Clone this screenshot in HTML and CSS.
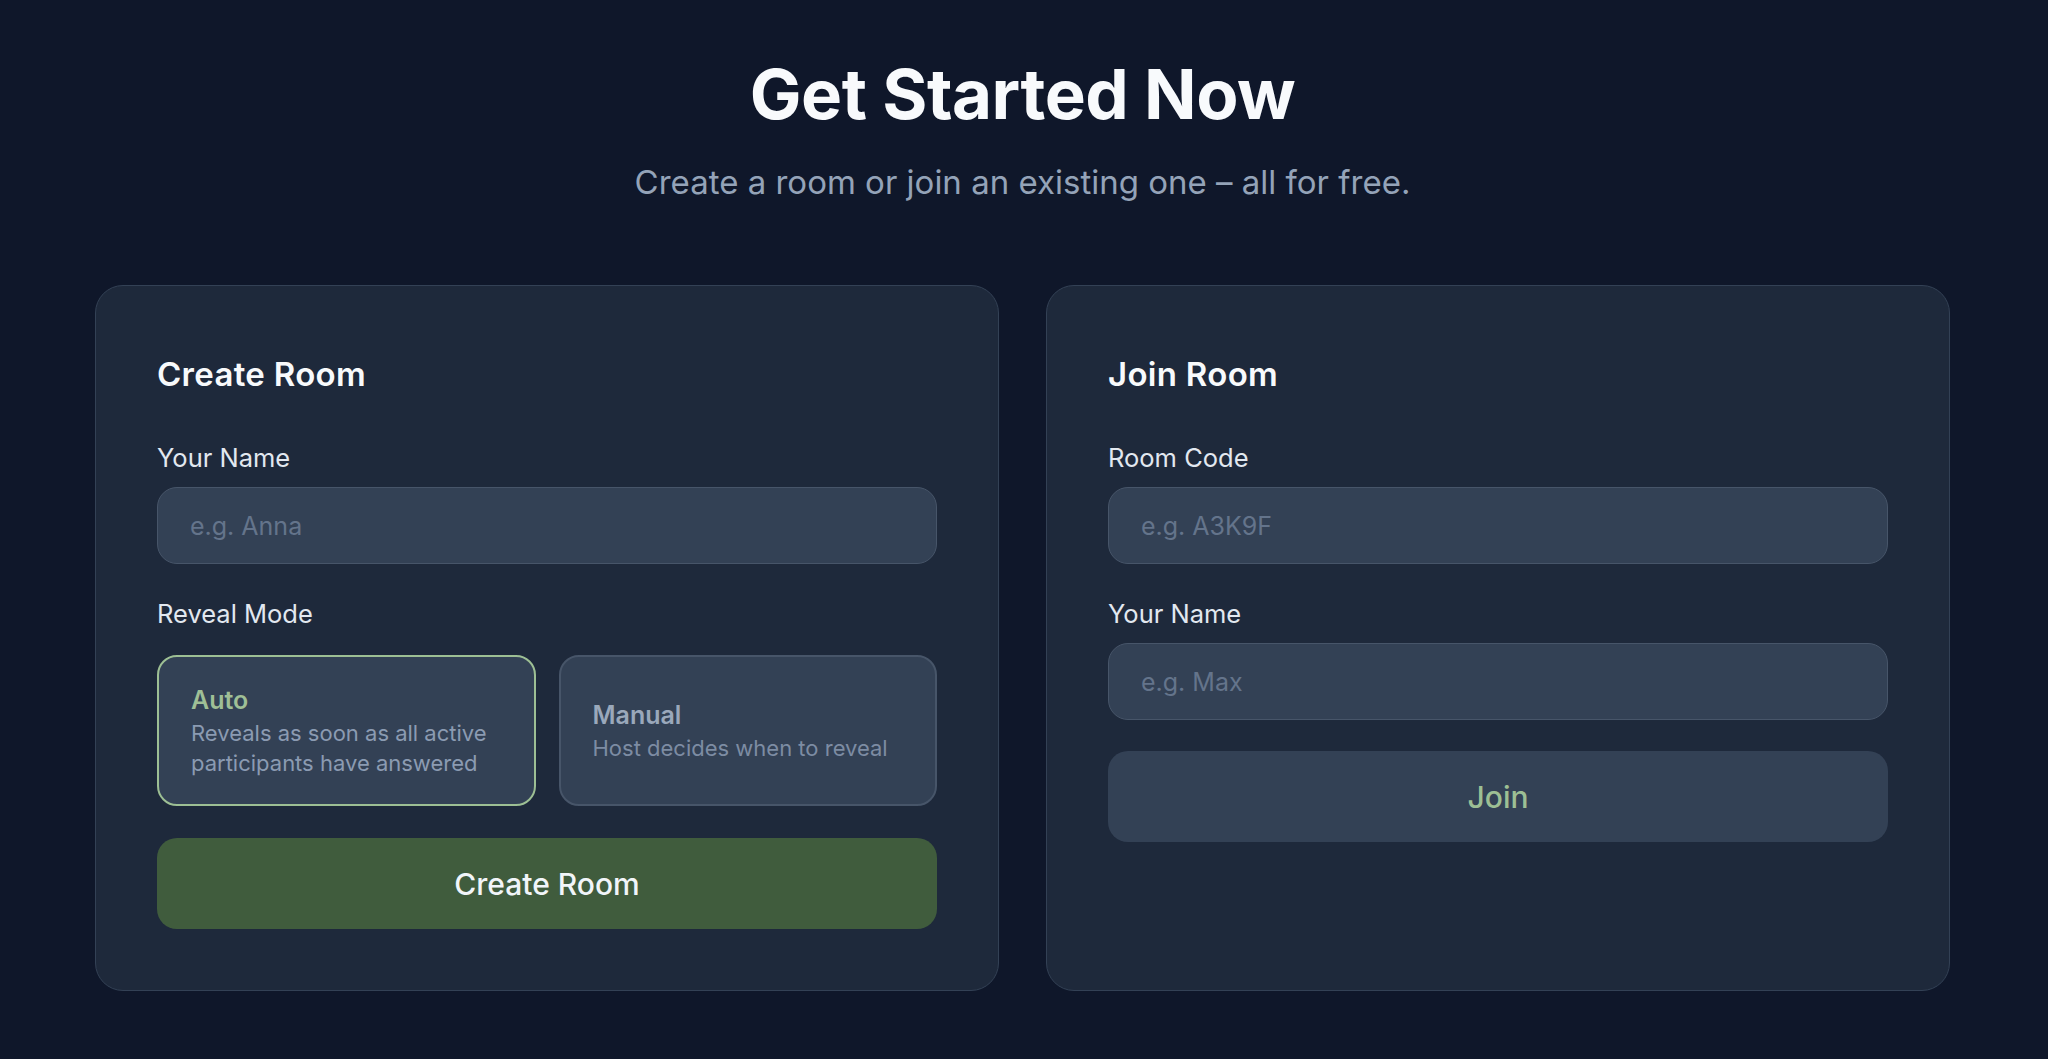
FILE: index.html
```html
<!DOCTYPE html>
<html lang="en">
<head>
<meta charset="utf-8">
<title>Get Started Now</title>
<link rel="stylesheet" href="styles.css">
</head>
<body>
<main class="page">
  <header class="hero">
    <h1 class="hero-title">Get Started Now</h1>
    <p class="hero-sub">Create a room or join an existing one – all for free.</p>
  </header>
  <section class="cards">
    <div class="card">
      <h2 class="card-title">Create Room</h2>
      <div class="field">
        <label class="label">Your Name</label>
        <input class="input" type="text" placeholder="e.g. Anna">
      </div>
      <div class="field">
        <label class="label">Reveal Mode</label>
        <div class="modes">
          <button class="mode mode-active" type="button">
            <span class="mode-name">Auto</span>
            <span class="mode-desc">Reveals as soon as all active participants have answered</span>
          </button>
          <button class="mode" type="button">
            <span class="mode-name">Manual</span>
            <span class="mode-desc">Host decides when to reveal</span>
          </button>
        </div>
      </div>
      <button class="btn btn-primary" type="button">Create Room</button>
    </div>
    <div class="card">
      <h2 class="card-title">Join Room</h2>
      <div class="field">
        <label class="label">Room Code</label>
        <input class="input" type="text" placeholder="e.g. A3K9F">
      </div>
      <div class="field">
        <label class="label">Your Name</label>
        <input class="input" type="text" placeholder="e.g. Max">
      </div>
      <button class="btn btn-secondary" type="button">Join</button>
    </div>
  </section>
</main>
</body>
</html>
```

FILE: styles.css
```css
* { box-sizing: border-box; }
html, body { margin: 0; padding: 0; }
body {
  background: #0f172a;
  font-family: Inter, "Liberation Sans", sans-serif;
  color: #f1f5f9;
  min-height: 1059px;
}
.page {
  padding: 52px 98px 0 95px;
}
.hero {
  text-align: center;
}
.hero-title {
  margin: 0;
  font-size: 69px;
  line-height: 84px;
  font-weight: 700;
  color: #f8fafc;
  letter-spacing: -0.5px;
}
.hero-sub {
  margin: 26px 0 0;
  font-size: 33px;
  line-height: 40px;
  color: #94a3b8;
  font-weight: 400;
}
.cards {
  display: grid;
  grid-template-columns: 1fr 1fr;
  gap: 47px;
  margin-top: 83px;
  align-items: stretch;
}
.card {
  background: #1e293b;
  border: 1px solid #334155;
  border-radius: 28px;
  padding: 62px 61px 61px;
  display: flex;
  flex-direction: column;
  min-height: 705px;
}
.card-title {
  margin: 6px 0 0;
  font-size: 33px;
  line-height: 40px;
  font-weight: 600;
  color: #f8fafc;
  letter-spacing: 0.3px;
}
.field {
  display: flex;
  flex-direction: column;
}
.card-title + .field { margin-top: 48px; }
.field + .field { margin-top: 34px; }
.label {
  font-size: 25.5px;
  line-height: 32px;
  color: #e2e8f0;
  margin-bottom: 13px;
}
.input {
  height: 77px;
  width: 100%;
  background: #334155;
  border: 1px solid #475569;
  border-radius: 20px;
  padding: 0 32px;
  font-family: inherit;
  font-size: 25px;
  color: #f1f5f9;
  outline: none;
}
.input::placeholder { color: #64748b; }
.modes {
  display: grid;
  grid-template-columns: 1fr 1fr;
  gap: 23px;
  margin-top: 12px;
}
.mode {
  height: 151px;
  background: #334155;
  border: 2px solid #475569;
  border-radius: 20px;
  padding: 0 32px;
  display: flex;
  flex-direction: column;
  justify-content: center;
  align-items: flex-start;
  text-align: left;
  font-family: inherit;
  cursor: pointer;
}
.mode-active { border-color: #9dbf94; }
.mode-name {
  font-size: 25px;
  line-height: 32px;
  font-weight: 600;
  color: #9aa8bb;
}
.mode-active .mode-name { color: #9fbf96; }
.mode-desc {
  margin-top: 2px;
  font-size: 22px;
  line-height: 30px;
  color: #7d8ca3;
}
.mode-active .mode-desc { color: #8b9bb2; }
.btn {
  height: 91px;
  width: 100%;
  border: none;
  border-radius: 20px;
  font-family: inherit;
  font-size: 30px;
  font-weight: 500;
  cursor: pointer;
}
.btn-primary {
  margin-top: 32px;
  background: #405c3d;
  color: #f1f5f9;
}
.btn-secondary {
  margin-top: 31px;
  background: #334155;
  color: #9dbf94;
}
```
